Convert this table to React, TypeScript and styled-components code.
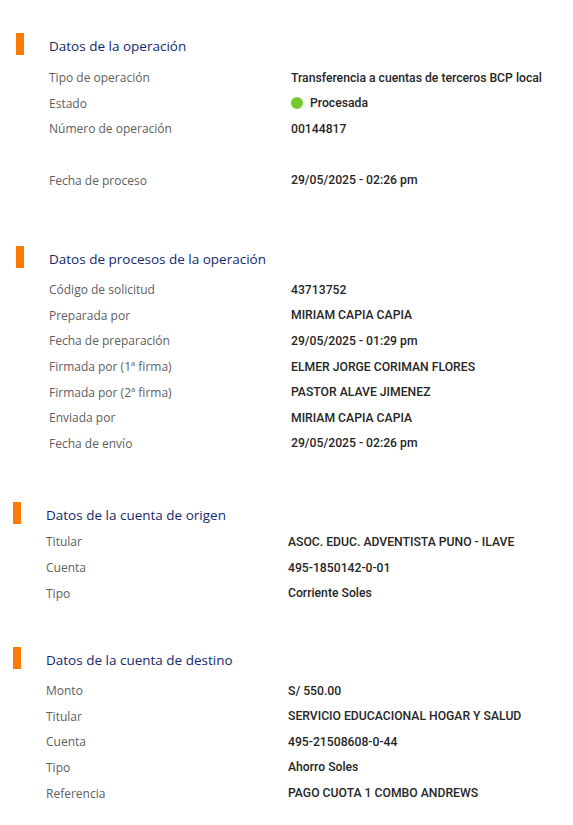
import styled, { createGlobalStyle } from "styled-components";

const GlobalStyle = createGlobalStyle`
  body {
    margin: 0;
    background: #ffffff;
    font-family: "Open Sans", "Noto Sans", sans-serif;
  }
`;

const navy = "#12296e";
const orange = "#ff7a00";

const Page = styled.main`
  width: 573px;
  height: 825px;
  background: #ffffff;
  overflow: hidden;
`;

const Section = styled.section<{ $top: number; $left: number; $gap: number }>`
  margin-top: ${(p) => p.$top}px;
  padding-left: ${(p) => p.$left}px;
  display: flex;
  flex-direction: column;
  row-gap: ${(p) => p.$gap}px;
`;

const Header = styled.header`
  display: flex;
  align-items: center;
  column-gap: 25px;
  height: 22px;
`;

const Bar = styled.span`
  width: 8px;
  height: 22px;
  background: ${orange};
`;

const Title = styled.h2`
  margin: 4px 0 0;
  font-size: 13.5px;
  font-weight: 400;
  color: ${navy};
`;

const Rows = styled.dl`
  margin: 0 0 0 33px;
  display: grid;
  grid-template-columns: 242px 1fr;
  grid-auto-rows: 25.6px;
  align-items: center;
`;

const Spacer = styled.div`
  grid-column: 1 / -1;
  height: 24px;
`;

const Label = styled.dt`
  font-size: 12px;
  color: #5e5e5e;
`;

const Value = styled.dd`
  margin: 0;
  font-family: Roboto, "Open Sans", sans-serif;
  font-size: 12.2px;
  font-weight: 500;
  color: #262626;
  display: flex;
  align-items: center;
  column-gap: 7px;
`;

const Dot = styled.span`
  width: 12px;
  height: 12px;
  border-radius: 50%;
  background: #76c92b;
`;

type Item = [string, string] | null;

const sections: {
  title: string;
  top: number;
  left: number;
  gap: number;
  items: Item[];
}[] = [
  {
    title: "Datos de la operación",
    top: 33,
    left: 16,
    gap: 10,
    items: [
      ["Tipo de operación", "Transferencia a cuentas de terceros BCP local"],
      ["Estado", "Procesada"],
      ["Número de operación", "00144817"],
      null,
      ["Fecha de proceso", "29/05/2025 - 02:26 pm"],
    ],
  },
  {
    title: "Datos de procesos de la operación",
    top: 53,
    left: 16,
    gap: 9,
    items: [
      ["Código de solicitud", "43713752"],
      ["Preparada por", "MIRIAM CAPIA CAPIA"],
      ["Fecha de preparación", "29/05/2025 - 01:29 pm"],
      ["Firmada por (1ª firma)", "ELMER JORGE CORIMAN FLORES"],
      ["Firmada por (2ª firma)", "PASTOR ALAVE JIMENEZ"],
      ["Enviada por", "MIRIAM CAPIA CAPIA"],
      ["Fecha de envío", "29/05/2025 - 02:26 pm"],
    ],
  },
  {
    title: "Datos de la cuenta de origen",
    top: 46,
    left: 13,
    gap: 5,
    items: [
      ["Titular", "ASOC. EDUC. ADVENTISTA PUNO - ILAVE"],
      ["Cuenta", "495-1850142-0-01"],
      ["Tipo", "Corriente Soles"],
    ],
  },
  {
    title: "Datos de la cuenta de destino",
    top: 41,
    left: 13,
    gap: 9,
    items: [
      ["Monto", "S/ 550.00"],
      ["Titular", "SERVICIO EDUCACIONAL HOGAR Y SALUD"],
      ["Cuenta", "495-21508608-0-44"],
      ["Tipo", "Ahorro Soles"],
      ["Referencia", "PAGO CUOTA 1 COMBO ANDREWS"],
    ],
  },
];

const App = () => {
  return (
    <Page>
      <GlobalStyle />
      {sections.map((s) => (
        <Section key={s.title} $top={s.top} $left={s.left} $gap={s.gap}>
          <Header>
            <Bar />
            <Title>{s.title}</Title>
          </Header>
          <Rows>
            {s.items.map((item, i) =>
              item ? (
                [
                  <Label key={`l${i}`}>{item[0]}</Label>,
                  <Value key={`v${i}`}>
                    {item[1] === "Procesada" && <Dot />}
                    {item[1]}
                  </Value>,
                ]
              ) : (
                <Spacer key={`s${i}`} />
              )
            )}
          </Rows>
        </Section>
      ))}
    </Page>
  );
};

export default App;
